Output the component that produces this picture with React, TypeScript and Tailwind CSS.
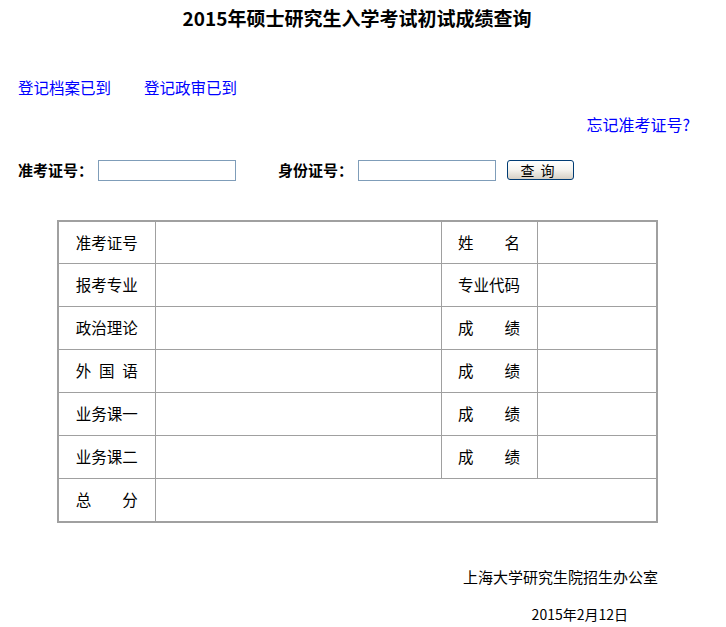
import React from "react"

const font = { fontFamily: '"Noto Sans CJK SC", "Liberation Sans", sans-serif' }

const Spread = ({ a, b, c }: { a: string; b: string; c?: string }) => (
  <span className="inline-flex w-[62px] justify-between">
    <span>{a}</span>
    {c && <span>{c}</span>}
    <span>{b}</span>
  </span>
)

const rows: { label: React.ReactNode; right: React.ReactNode }[] = [
  { label: "准考证号", right: <Spread a="姓" b="名" /> },
  { label: "报考专业", right: "专业代码" },
  { label: "政治理论", right: <Spread a="成" b="绩" /> },
  { label: <Spread a="外" c="国" b="语" />, right: <Spread a="成" b="绩" /> },
  { label: "业务课一", right: <Spread a="成" b="绩" /> },
  { label: "业务课二", right: <Spread a="成" b="绩" /> },
]

export default function App() {
  return (
    <div className="w-[726px] h-[627px] bg-white text-black overflow-hidden" style={font}>
      <div className="pt-[6px] pr-[12px] text-center text-[19px] font-bold leading-[24px]">
        2015年硕士研究生入学考试初试成绩查询
      </div>

      <div className="mt-[47px] flex gap-[33px] pl-[18px] text-[15.5px] leading-[20px] text-[#0000ff]">
        <a className="cursor-pointer">登记档案已到</a>
        <a className="cursor-pointer">登记政审已到</a>
      </div>

      <div className="mt-[17px] flex justify-end pr-[36px] text-[16px] leading-[20px] text-[#0000ff]">
        <a className="cursor-pointer">忘记准考证号?</a>
      </div>

      <div className="mt-[25px] flex items-center pl-[18px] text-[15px] font-bold">
        <span className="w-[80px]">准考证号：</span>
        <input className="h-[21px] w-[138px] border border-[#7f9db9] outline-none" />
        <span className="ml-[42px] w-[80px]">身份证号：</span>
        <input className="h-[21px] w-[138px] border border-[#7f9db9] outline-none" />
        <button className="ml-[11px] h-[20px] w-[67px] rounded-[3px] border border-[#003c74] bg-gradient-to-b from-white via-[#f4f3ee] to-[#d6d0c5] text-[14px] font-normal leading-[18px] tracking-[6px]">
          查询
        </button>
      </div>

      <table className="ml-[57px] mt-[38px] w-[601px] border-collapse border-2 border-[#a0a0a0] text-[15.5px]">
        <tbody>
          {rows.map((r, i) => (
            <tr key={i} className="h-[43px]">
              <td className="w-[97px] border border-[#a0a0a0] text-center">{r.label}</td>
              <td className="w-[286px] border border-[#a0a0a0]"></td>
              <td className="w-[96px] border border-[#a0a0a0] text-center">{r.right}</td>
              <td className="border border-[#a0a0a0]"></td>
            </tr>
          ))}
          <tr className="h-[43px]">
            <td className="border border-[#a0a0a0] text-center">
              <Spread a="总" b="分" />
            </td>
            <td colSpan={3} className="border border-[#a0a0a0]"></td>
          </tr>
        </tbody>
      </table>

      <div className="mt-[44px] flex justify-end pr-[68px] text-[15px] leading-[20px]">
        上海大学研究生院招生办公室
      </div>
      <div className="mt-[17px] flex justify-end pr-[98px] text-[14px] leading-[20px]">
        2015年2月12日
      </div>
    </div>
  )
}
